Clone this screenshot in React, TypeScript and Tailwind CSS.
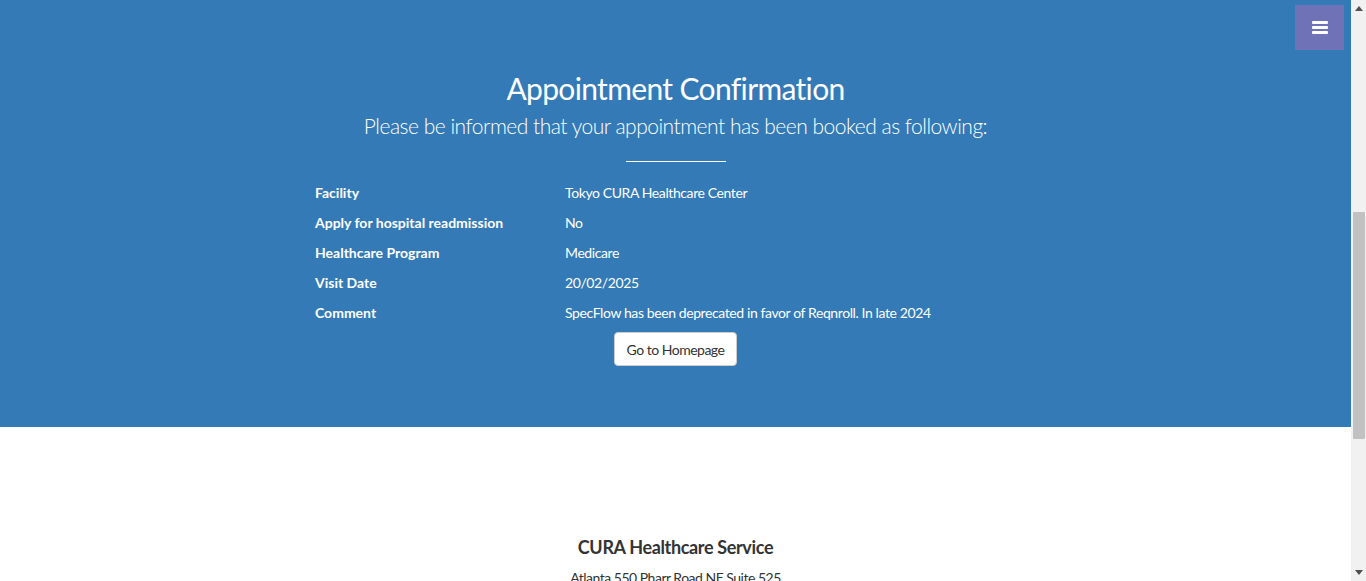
import React from "react";

const rows: [string, string][] = [
  ["Facility", "Tokyo CURA Healthcare Center"],
  ["Apply for hospital readmission", "No"],
  ["Healthcare Program", "Medicare"],
  ["Visit Date", "20/02/2025"],
  ["Comment", "SpecFlow has been deprecated in favor of Reqnroll. In late 2024"],
];

const App = () => {
  return (
    <div className="h-[581px] w-full overflow-hidden flex bg-white font-['Lato',sans-serif]">
      {/* Page */}
      <div className="flex-1 relative flex flex-col min-w-0">
        {/* Menu toggle */}
        <button className="absolute top-[5px] right-[7px] w-[49px] h-[45px] bg-[#6f72b6] flex flex-col items-center justify-center gap-[2px]">
          <span className="block w-[16px] h-[3px] bg-white rounded-[1px]" />
          <span className="block w-[16px] h-[3px] bg-white rounded-[1px]" />
          <span className="block w-[16px] h-[3px] bg-white rounded-[1px]" />
        </button>

        {/* Confirmation */}
        <section className="bg-[#337ab7] h-[427px] shrink-0 text-white flex flex-col items-center pt-[68px]">
          <h2 className="text-[30px] leading-[40px] font-normal tracking-[-0.65px]">Appointment Confirmation</h2>
          <p className="text-[21px] leading-[30px] font-light mt-[3px] tracking-[-0.5px]">
            Please be informed that your appointment has been booked as following:
          </p>
          <hr className="w-[100px] border-t border-white mt-[20px]" />

          <div className="w-[721px] mt-[15px] grid grid-cols-[250px_1fr] text-[14px]">
            {rows.map(([label, value]) => (
              <React.Fragment key={label}>
                <div className="h-[30px] flex items-center font-bold">{label}</div>
                <div className="h-[30px] flex items-center tracking-[-0.4px]">{value}</div>
              </React.Fragment>
            ))}
          </div>

          <button className="mt-[5px] w-[123px] h-[34px] bg-white text-[#333] text-[14px] tracking-[-0.5px] border border-[#cccccc] rounded-[4px]">
            Go to Homepage
          </button>
        </section>

        {/* Footer */}
        <footer className="flex flex-col items-center text-[#333] pt-[108px]">
          <h4 className="text-[18px] leading-[24px] font-bold tracking-[-0.35px]">CURA Healthcare Service</h4>
          <p className="text-[14px] leading-[20px] mt-[9px] tracking-[-0.5px]">Atlanta 550 Pharr Road NE Suite 525</p>
        </footer>
      </div>

      {/* Scrollbar */}
      <div className="w-[15px] shrink-0 bg-[#f1f1f1] flex flex-col items-center">
        <div className="h-[17px] flex items-center justify-center">
          <svg width="8" height="5" viewBox="0 0 8 5"><path d="M4 0L8 5H0z" fill="#505050" /></svg>
        </div>
        <div className="h-[195px]" />
        <div className="w-[12px] h-[227px] bg-[#c1c1c1] rounded-[1px]" />
        <div className="flex-1" />
        <div className="h-[17px] flex items-center justify-center">
          <svg width="8" height="5" viewBox="0 0 8 5"><path d="M0 0H8L4 5z" fill="#505050" /></svg>
        </div>
      </div>
    </div>
  );
};

export default App;
